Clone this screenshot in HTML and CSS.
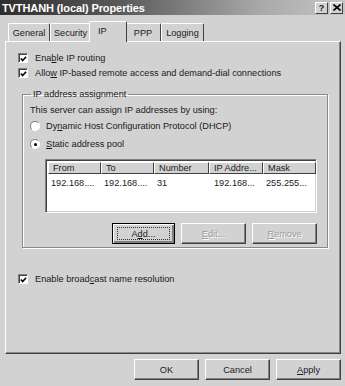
FILE: index.html
```html
<!DOCTYPE html>
<html>
<head>
<meta charset="utf-8">
<link rel="stylesheet" href="styles.css">
</head>
<body>
<div class="window">
  <div class="titlebar">
    <span class="title">TVTHANH (local) Properties</span>
    <div class="caption-btns">
      <span class="cbtn help">?</span>
      <span class="cbtn close">
        <svg width="8" height="7" viewBox="0 0 8 7"><path d="M0.5 0.5 L7.5 6.5 M7.5 0.5 L0.5 6.5" stroke="#000" stroke-width="1.6"/></svg>
      </span>
    </div>
  </div>

  <div class="tabs">
    <div class="tab t-general">General</div>
    <div class="tab t-security">Security</div>
    <div class="tab active t-ip">IP</div>
    <div class="tab t-ppp">PPP</div>
    <div class="tab t-logging">Logging</div>
  </div>

  <div class="panel">
    <label class="row check-row">
      <span class="checkbox"><svg width="8" height="8" viewBox="0 0 8 8"><path d="M1 3.5 L3 5.8 L7 1.5" fill="none" stroke="#000" stroke-width="1.8"/></svg></span>
      <span>Ena<u>b</u>le IP routing</span>
    </label>
    <label class="row check-row second">
      <span class="checkbox"><svg width="8" height="8" viewBox="0 0 8 8"><path d="M1 3.5 L3 5.8 L7 1.5" fill="none" stroke="#000" stroke-width="1.8"/></svg></span>
      <span>Allo<u>w</u> IP-based remote access and demand-dial connections</span>
    </label>

    <fieldset class="group">
      <legend>IP address assignment</legend>
      <div class="row intro">This server can assign IP addresses by using:</div>
      <label class="row radio-row r1">
        <span class="radio"></span>
        <span>Dy<u>n</u>amic Host Configuration Protocol (DHCP)</span>
      </label>
      <label class="row radio-row r2">
        <span class="radio checked"><span class="dot"></span></span>
        <span><u>S</u>tatic address pool</span>
      </label>

      <div class="listview">
        <div class="lv-head">
          <div class="lv-col c1">From</div>
          <div class="lv-col c2">To</div>
          <div class="lv-col c3">Number</div>
          <div class="lv-col c4">IP Addre...</div>
          <div class="lv-col c5">Mask</div>
        </div>
        <div class="lv-row">
          <div class="lv-cell c1">192.168....</div>
          <div class="lv-cell c2">192.168....</div>
          <div class="lv-cell c3">31</div>
          <div class="lv-cell c4">192.168...</div>
          <div class="lv-cell c5">255.255...</div>
        </div>
      </div>

      <div class="group-btns">
        <div class="btn default"><span class="focus">A<u>d</u>d...</span></div>
        <div class="btn disabled"><u>E</u>dit...</div>
        <div class="btn disabled"><u>R</u>emove</div>
      </div>
    </fieldset>

    <label class="row check-row third">
      <span class="checkbox"><svg width="8" height="8" viewBox="0 0 8 8"><path d="M1 3.5 L3 5.8 L7 1.5" fill="none" stroke="#000" stroke-width="1.8"/></svg></span>
      <span>Enable broad<u>c</u>ast name resolution</span>
    </label>
  </div>

  <div class="footer">
    <div class="btn fbtn">OK</div>
    <div class="btn fbtn">Cancel</div>
    <div class="btn fbtn"><u>A</u>pply</div>
  </div>
</div>
</body>
</html>
```

FILE: styles.css
```css
html, body {
  margin: 0;
  padding: 0;
  background: #d2d2d2;
}

.window {
  width: 345px;
  height: 386px;
  background: #d2d2d2;
  font-family: "Liberation Sans", Arial, sans-serif;
  font-size: 9.2px;
  color: #1a1a1a;
  overflow: hidden;
  display: flex;
  flex-direction: column;
}

u { text-decoration: underline; text-underline-offset: 1px; }

/* title bar */
.titlebar {
  height: 15px;
  display: flex;
  align-items: center;
  justify-content: space-between;
  background: linear-gradient(to right, #2e2e2e 0%, #5a5a5a 35%, #a8a8a8 75%, #c6c6c6 100%);
  padding: 0 2px 0 2px;
}
.title {
  color: #fff;
  font-weight: bold;
  font-size: 11px;
  letter-spacing: -0.1px;
}
.caption-btns {
  display: flex;
  gap: 2px;
}
.cbtn {
  width: 11px;
  height: 10px;
  background: #d2d2d2;
  border-top: 1px solid #fff;
  border-left: 1px solid #fff;
  border-right: 1px solid #404040;
  border-bottom: 1px solid #404040;
  display: flex;
  align-items: center;
  justify-content: center;
  font-weight: bold;
  font-size: 9px;
  line-height: 10px;
}

/* tabs */
.tabs {
  display: flex;
  align-items: flex-end;
  height: 20px;
  margin-top: 6px;
  padding-left: 8px;
  position: relative;
  z-index: 1;
}
.tab {
  border-top: 1px solid #fff;
  border-left: 1px solid #fff;
  border-right: 1px solid #404040;
  border-radius: 2px 2px 0 0;
  display: flex;
  align-items: center;
  justify-content: center;
  box-sizing: border-box;
  height: 18px;
  background: #d2d2d2;
}
.t-general { width: 42px; }
.t-security { width: 41px; }
.t-ip { width: 38px; }
.t-ppp { width: 36px; }
.t-logging { width: 43px; }
.tab.active {
  height: 21px;
  margin: 0 -2px;
  margin-bottom: -1px;
  padding-bottom: 2px;
  justify-content: flex-start;
  padding-left: 8px;
  position: relative;
  z-index: 2;
}

/* panel */
.panel {
  margin: 0 4px 0 5px;
  height: 313px;
  box-sizing: border-box;
  border-top: 1px solid #fff;
  border-left: 1px solid #fff;
  border-right: 1px solid #404040;
  border-bottom: 1px solid #404040;
  box-shadow: inset -1px -1px 0 #888;
  padding: 10px 0 0 12px;
  display: flex;
  flex-direction: column;
}

.row {
  display: flex;
  align-items: center;
  height: 12px;
  white-space: nowrap;
}
.check-row { gap: 7px; }
.check-row.second { margin-top: 3px; }
.check-row.third { margin-top: 25px; }

.checkbox {
  width: 8px;
  height: 8px;
  background: #fff;
  border-top: 1px solid #808080;
  border-left: 1px solid #808080;
  border-right: 1px solid #fff;
  border-bottom: 1px solid #fff;
  box-shadow: inset 1px 1px 0 #404040;
  display: flex;
  align-items: center;
  justify-content: center;
}
.checkbox svg { margin: 1px 0 0 1px; }

/* group box */
.group {
  margin: 9px 12px 0 4px;
  padding: 0 10px 6px 7px;
  border: 1px solid #8a8a8a;
  box-shadow: 1px 1px 0 #fff, inset 1px 1px 0 #fff;
  height: 160px;
  box-sizing: border-box;
  min-width: 0;
}
.group legend {
  padding: 0 2px;
  margin-left: 1px;
  line-height: 12px;
}
.intro { margin-top: 4px; }
.radio-row { gap: 6px; }
.radio-row.r1 { margin-top: 4px; }
.radio-row.r2 { margin-top: 6px; }

.radio {
  width: 8px;
  height: 8px;
  border-radius: 50%;
  background: #fff;
  border: 1px solid;
  border-color: #808080 #fff #fff #808080;
  display: flex;
  align-items: center;
  justify-content: center;
}
.radio .dot {
  width: 3px;
  height: 3px;
  border-radius: 50%;
  background: #000;
}

/* list view */
.listview {
  margin: 9px 0 0 15px;
  width: 272px;
  height: 54px;
  box-sizing: border-box;
  background: #fff;
  border-top: 1px solid #808080;
  border-left: 1px solid #808080;
  border-right: 1px solid #fff;
  border-bottom: 1px solid #fff;
  box-shadow: inset 1px 1px 0 #404040, inset -1px -1px 0 #d2d2d2;
  padding: 2px 0 0 2px;
}
.lv-head {
  display: flex;
  height: 12px;
}
.lv-col {
  height: 12px;
  box-sizing: border-box;
  background: #d2d2d2;
  border-top: 1px solid #fff;
  border-left: 1px solid #fff;
  border-right: 1px solid #404040;
  border-bottom: 1px solid #404040;
  padding-left: 4px;
  line-height: 10px;
  white-space: nowrap;
  overflow: hidden;
}
.c1 { width: 53px; }
.c2 { width: 53px; }
.c3 { width: 55px; }
.c4 { width: 54px; }
.c5 { width: 53px; }
.lv-row {
  display: flex;
  height: 13px;
  align-items: center;
  margin-top: 2px;
}
.lv-cell {
  padding-left: 3px;
  box-sizing: border-box;
  white-space: nowrap;
}
.lv-cell.c4 { padding-left: 5px; }

/* buttons */
.group-btns {
  display: flex;
  justify-content: flex-end;
  gap: 6px;
  margin-top: 10px;
}
.btn {
  box-sizing: border-box;
  height: 21px;
  width: 64px;
  background: #d2d2d2;
  border-top: 1px solid #fff;
  border-left: 1px solid #fff;
  border-right: 1px solid #404040;
  border-bottom: 1px solid #404040;
  box-shadow: inset -1px -1px 0 #808080;
  display: flex;
  align-items: center;
  justify-content: center;
}
.btn.default {
  border: 1px solid #000;
  box-shadow: inset 1px 1px 0 #fff, inset -2px -2px 0 #808080;
  width: 63px;
}
.btn .focus {
  border: 1px dotted #333;
  width: 53px;
  height: 13px;
  box-sizing: border-box;
  display: flex;
  align-items: center;
  justify-content: center;
}
.btn.disabled {
  color: #9a9a9a;
  text-shadow: 1px 1px 0 #fff;
  width: 65px;
}

.footer {
  display: flex;
  justify-content: flex-end;
  gap: 6px;
  padding: 5px 4px 0 0;
}
.fbtn {
  width: 65px;
  height: 21px;
}
```
